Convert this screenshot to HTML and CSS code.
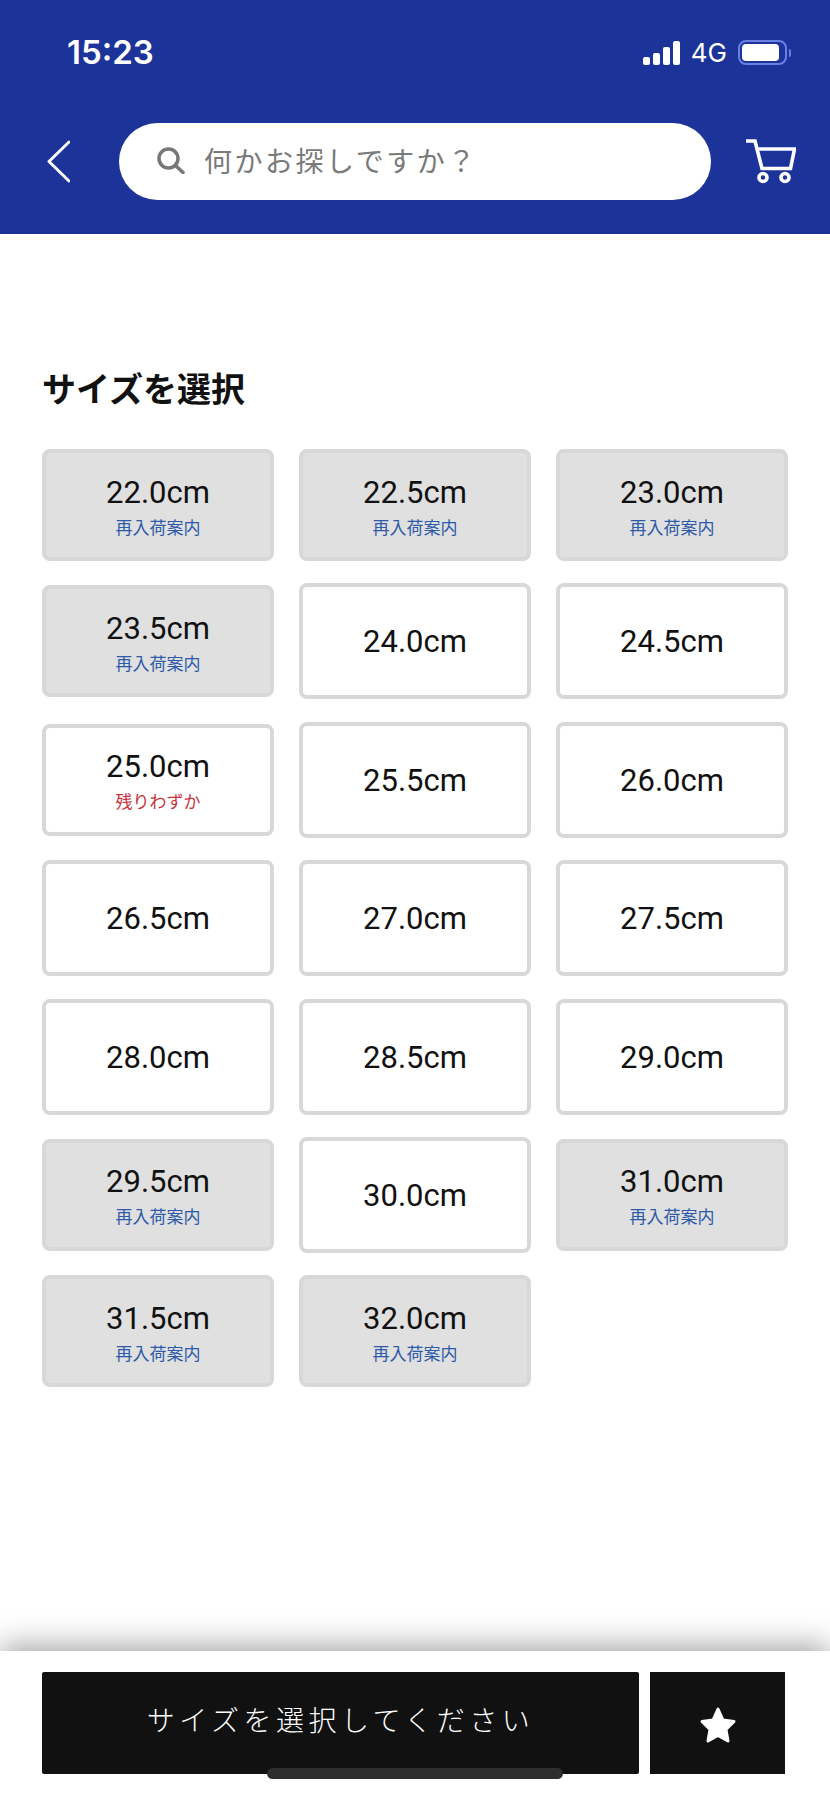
FILE: index.html
```html
<!DOCTYPE html>
<html lang="ja">
<head>
    <meta charset="UTF-8">
    <meta name="viewport" content="width=device-width, initial-scale=1.0">
    <title>サイズを選択</title>
    <link rel="stylesheet" href="styles.css">
</head>
<body>
    <header class="header">
        <div class="status-bar">
            <span class="time">15:23</span>
            <div class="status-icons">
                <div class="signal">
                    <span class="signal-bar bar-1"></span>
                    <span class="signal-bar bar-2"></span>
                    <span class="signal-bar bar-3"></span>
                    <span class="signal-bar bar-4"></span>
                </div>
                <span class="network">4G</span>
                <div class="battery"><span class="battery-level"></span></div>
                <span class="battery-nub"></span>
            </div>
        </div>
        <div class="nav">
            <svg class="back" viewBox="0 0 23 43" fill="none" stroke="#fff" stroke-width="3" stroke-linecap="round" stroke-linejoin="round">
                <path d="M22 2 L2 21.500 L22 41"/>
            </svg>
            <div class="search">
                <svg class="search-icon" viewBox="0 0 29 27" fill="none" stroke="#777" stroke-width="3.500" stroke-linecap="round">
                    <circle cx="12.500" cy="11.500" r="9.500"/>
                    <path d="M19.500 18.500 L27 25.500"/>
                </svg>
                <span class="search-text">何かお探しですか？</span>
            </div>
            <svg class="cart" viewBox="0 0 50 45" fill="none" stroke="#fff" stroke-width="3.600" stroke-linejoin="miter" stroke-linecap="butt">
                <path d="M0 2 H9 L16 29.500 H44.500 L48.500 10 H11"/>
                <circle cx="17" cy="38.500" r="4"/>
                <circle cx="39" cy="38.500" r="4"/>
            </svg>
        </div>
    </header>

    <main class="content">
        <h1 class="title">サイズを選択</h1>
        <div class="size-grid">
            <button class="size size-out">22.0cm<span class="note">再入荷案内</span></button>
            <button class="size size-out">22.5cm<span class="note">再入荷案内</span></button>
            <button class="size size-out">23.0cm<span class="note">再入荷案内</span></button>
            <button class="size size-out">23.5cm<span class="note">再入荷案内</span></button>
            <button class="size">24.0cm</button>
            <button class="size">24.5cm</button>
            <button class="size size-low">25.0cm<span class="note">残りわずか</span></button>
            <button class="size">25.5cm</button>
            <button class="size">26.0cm</button>
            <button class="size">26.5cm</button>
            <button class="size">27.0cm</button>
            <button class="size">27.5cm</button>
            <button class="size">28.0cm</button>
            <button class="size">28.5cm</button>
            <button class="size">29.0cm</button>
            <button class="size size-out">29.5cm<span class="note">再入荷案内</span></button>
            <button class="size">30.0cm</button>
            <button class="size size-out">31.0cm<span class="note">再入荷案内</span></button>
            <button class="size size-out">31.5cm<span class="note">再入荷案内</span></button>
            <button class="size size-out">32.0cm<span class="note">再入荷案内</span></button>
        </div>
    </main>

    <footer class="footer">
        <button class="select-button">サイズを選択してください</button>
        <button class="favorite-button">
            <svg class="star" viewBox="0 0 40 38" fill="#fff" stroke="#fff" stroke-width="3" stroke-linejoin="round">
                <path d="M20 3 L25 14 L36 15.500 L28 23.500 L30 35 L20 29.500 L10 35 L12 23.500 L4 15.500 L15 14 Z"/>
            </svg>
        </button>
        <div class="home-indicator"></div>
    </footer>
</body>
</html>
```

FILE: styles.css
```css
* {
    box-sizing: border-box;
}

body {
    margin: 0;
    height: 1796px;
    display: flex;
    flex-direction: column;
    overflow: hidden;
    background-color: #fff;
    color: #111;
    font-family: 'Roboto', 'Noto Sans CJK JP', sans-serif;
}

button {
    font-family: inherit;
    cursor: pointer;
}

/* header */
.header {
    height: 234px;
    padding-top: 40px;
    background-color: #1c3399;
    color: #fff;
}

.status-bar {
    height: 25px;
    padding: 0 39px 0 67px;
    display: flex;
    align-items: center;
    justify-content: space-between;
}

.time {
    font-family: 'Inter', sans-serif;
    font-size: 33px;
    font-weight: 600;
    line-height: 25px;
}

.status-icons {
    display: flex;
    align-items: center;
}

.signal {
    display: flex;
    align-items: flex-end;
    gap: 3px;
    height: 24px;
}

.signal-bar {
    width: 7px;
    border-radius: 2px;
    background-color: #fff;
}

.bar-1 { height: 8px; }
.bar-2 { height: 12px; }
.bar-3 { height: 18px; }
.bar-4 { height: 24px; }

.network {
    margin-left: 11px;
    font-family: 'Inter', sans-serif;
    font-size: 26px;
    line-height: 25px;
}

.battery {
    width: 49px;
    height: 25px;
    margin-left: 11px;
    padding: 2px;
    border: 2px solid #6a80e0;
    border-radius: 8px;
}

.battery-level {
    display: block;
    width: 37px;
    height: 100%;
    border-radius: 4px;
    background-color: #fff;
}

.battery-nub {
    width: 2px;
    height: 8px;
    margin-left: 2px;
    border-radius: 0 2px 2px 0;
    background-color: #6a80e0;
}

.nav {
    height: 77px;
    margin-top: 58px;
    padding: 0 34px 0 47px;
    display: flex;
    align-items: center;
}

.back {
    width: 23px;
    height: 43px;
}

.search {
    flex: 1;
    height: 77px;
    margin: 0 35px 0 49px;
    padding: 0 0 2px 37px;
    display: flex;
    align-items: center;
    border-radius: 39px;
    background-color: #fff;
}

.search-icon {
    width: 29px;
    height: 27px;
}

.search-text {
    margin: 0 0 2px 19px;
    font-family: 'Noto Sans CJK JP', sans-serif;
    font-size: 28px;
    letter-spacing: 2.500px;
    color: #7a7a7a;
}

.cart {
    width: 50px;
    height: 45px;
}

/* size list */
.content {
    flex: 1;
    padding: 134px 42px 0;
}

.title {
    margin: 0 0 41px;
    font-family: 'Noto Sans CJK JP', sans-serif;
    font-size: 34px;
    font-weight: 700;
    line-height: 40px;
    color: #111;
}

.size-grid {
    display: grid;
    grid-template-columns: repeat(3, 1fr);
    gap: 22.400px 25px;
    align-items: center;
}

.size {
    height: 116px;
    padding: 2px 0 0;
    display: flex;
    flex-direction: column;
    align-items: center;
    justify-content: center;
    background-color: #fff;
    border: 4px solid #d8d8d8;
    border-radius: 8px;
    font-size: 31px;
    line-height: 36px;
    color: #111;
}

.size-out,
.size-low {
    height: 112px;
    padding-top: 3px;
}

.size-out {
    background-color: #e0e0e0;
}

.note {
    margin-top: 4px;
    font-family: 'Noto Sans CJK JP', sans-serif;
    font-size: 17px;
    line-height: 24px;
}

.size-out .note {
    color: #2e5aa8;
}

.size-low .note {
    color: #c8323c;
}

/* bottom bar */
.footer {
    position: relative;
    height: 145px;
    padding: 21px 45px 0 42px;
    display: flex;
    align-items: flex-start;
    gap: 11px;
    background-color: #fff;
    box-shadow: 0 -6px 28px rgba(0, 0, 0, 0.35);
}

.select-button {
    flex: 1;
    height: 102px;
    padding: 0 0 8px;
    border: none;
    border-radius: 2px;
    background-color: #111;
    color: #fff;
    font-family: 'Noto Sans CJK JP', sans-serif;
    font-size: 28px;
    font-weight: 300;
    letter-spacing: 4.500px;
}

.favorite-button {
    width: 135px;
    height: 102px;
    padding: 0;
    display: flex;
    align-items: center;
    justify-content: center;
    border: none;
    background-color: #111;
}

.star {
    width: 40px;
    height: 38px;
    margin-top: 3px;
}

.home-indicator {
    position: absolute;
    left: 267px;
    bottom: 17px;
    width: 296px;
    height: 11px;
    border-radius: 6px;
    background-color: #2e2e2e;
}
```
